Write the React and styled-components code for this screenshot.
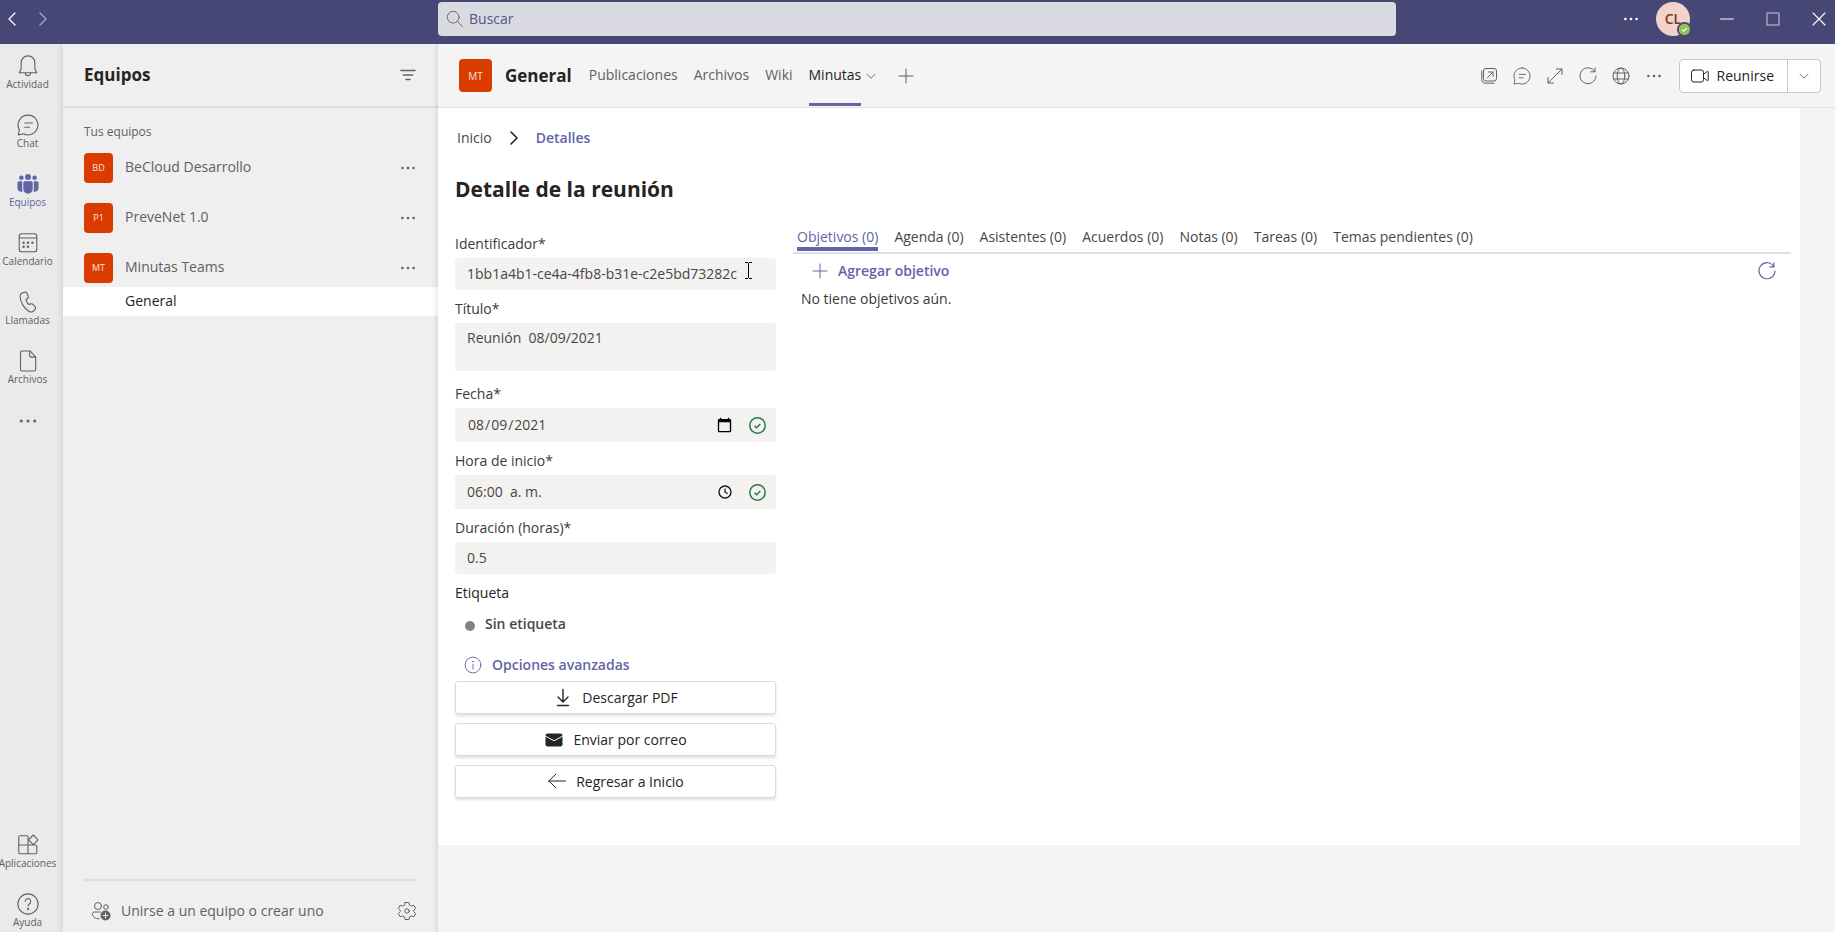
import { useState } from "react";
import styled, { createGlobalStyle } from "styled-components";

const GlobalStyle = createGlobalStyle`
  * {
    box-sizing: border-box;
  }

  body {
    margin: 0;
    background: #f4f4f4;
    color: #252423;
    font-family: "Open Sans", "Noto Sans", sans-serif;
    font-size: 14px;
    line-height: 20px;
  }

  button,
  input,
  textarea {
    font: inherit;
    color: inherit;
  }

  a {
    color: inherit;
    text-decoration: none;
  }
`;

const Shell = styled.div`
  display: flex;
  flex-direction: column;
  height: 100vh;
`;

const IconButton = styled.button`
  display: flex;
  align-items: center;
  justify-content: center;
  width: ${(props) => props.$width || 32}px;
  height: 32px;
  padding: 0;
  border: none;
  background: none;
  color: ${(props) => props.$color || "#616161"};
  cursor: pointer;
`;

/* ---------- Title bar ---------- */

const TitleBar = styled.header`
  position: relative;
  z-index: 3;
  display: grid;
  grid-template-columns: 438px 1fr 439px;
  flex-shrink: 0;
  height: 44px;
  padding-top: 2px;
  background: #464775;
`;

const HistoryNav = styled.div`
  display: flex;
  align-items: center;
  height: 34px;
`;

const SearchBox = styled.label`
  display: flex;
  align-items: center;
  gap: 5px;
  height: 34px;
  padding-left: 8px;
  border-radius: 4px;
  background: #dadae2;
  color: #616161;
`;

const SearchInput = styled.input`
  flex: 1;
  min-width: 0;
  padding: 0;
  border: none;
  outline: none;
  background: none;

  &::placeholder {
    color: #54558a;
    opacity: 1;
  }
`;

const WindowControls = styled.div`
  display: flex;
  align-items: center;
  justify-content: flex-end;
  height: 34px;
`;

const Avatar = styled.div`
  position: relative;
  display: flex;
  align-items: center;
  justify-content: center;
  width: 34px;
  height: 34px;
  margin: 0 21px 0 9px;
  border-radius: 50%;
  background: #f2d3cb;
  color: #7a3524;
  font-weight: 600;
`;

const Presence = styled.span`
  position: absolute;
  right: -2px;
  bottom: -1px;
  display: flex;
  border: 2px solid #464775;
  border-radius: 50%;
`;

/* ---------- App rail ---------- */

const Workspace = styled.div`
  display: flex;
  flex: 1;
  min-height: 0;
`;

const Rail = styled.nav`
  display: flex;
  flex-direction: column;
  justify-content: space-between;
  flex-shrink: 0;
  width: 63px;
  padding: 11px 8px 2px 0;
  background: #eaeaea;
`;

const RailGroup = styled.div`
  display: flex;
  flex-direction: column;
  gap: 22px;
`;

const RailItem = styled.button`
  display: flex;
  flex-direction: column;
  align-items: center;
  justify-content: center;
  height: ${(props) => (props.$compact ? 24 : 37)}px;
  padding: 0;
  border: none;
  background: none;
  color: ${(props) => (props.$active ? "#6264a7" : "#616161")};
  font-size: 10px;
  line-height: 15px;
  white-space: nowrap;
  cursor: pointer;
`;

/* ---------- Teams panel ---------- */

const TeamsPanel = styled.aside`
  position: relative;
  z-index: 1;
  display: flex;
  flex-direction: column;
  flex-shrink: 0;
  width: 375px;
  background: #efefef;
  box-shadow: 0 0 7px rgba(0, 0, 0, 0.16);
`;

const PanelHeader = styled.div`
  display: flex;
  align-items: center;
  justify-content: space-between;
  height: 64px;
  padding: 0 14px 0 21px;
  border-bottom: 2px solid #e0e0e0;
`;

const PanelTitle = styled.h1`
  margin: 0;
  font-size: 17px;
  font-weight: 700;
  line-height: 24px;
`;

const PanelLabel = styled.div`
  padding: 14px 21px 11px;
  color: #616161;
  font-size: 12px;
`;

const TeamList = styled.ul`
  display: flex;
  flex-direction: column;
  gap: 20px;
  margin: 0 0 4px;
  padding: 0 14px 0 21px;
  list-style: none;
`;

const TeamRow = styled.li`
  display: flex;
  align-items: center;
  gap: 12px;
  height: 30px;
  color: #616161;
`;

const TeamName = styled.a`
  flex: 1;
  padding-bottom: 3px;
`;

const TeamTile = styled.span`
  display: flex;
  align-items: center;
  justify-content: center;
  flex-shrink: 0;
  width: ${(props) => props.$size || 29}px;
  height: ${(props) => props.$size || 30}px;
  border-radius: 4px;
  background: #da3b01;
  color: #fbe3da;
  font-size: ${(props) => (props.$size ? 10 : 9)}px;
`;

const ChannelLink = styled.a`
  padding: 4px 0 5px 62px;
  background: #fff;
  color: #252423;
`;

const PanelFooter = styled.div`
  display: flex;
  align-items: center;
  justify-content: space-between;
  height: 53px;
  margin: auto 21px 0;
  padding-top: 9px;
  border-top: 2px solid #dedede;
`;

const JoinButton = styled.button`
  display: flex;
  align-items: center;
  gap: 10px;
  padding: 0 7px;
  border: none;
  background: none;
  color: #616161;
  cursor: pointer;
`;

/* ---------- Channel header ---------- */

const Main = styled.main`
  position: relative;
  z-index: 2;
  flex: 1;
  min-width: 0;
  background: #f4f4f4;
  box-shadow: 0 0 7px rgba(0, 0, 0, 0.16);
`;

const ChannelHeader = styled.div`
  display: flex;
  align-items: center;
  height: 64px;
  padding: 0 14px 0 21px;
  border-bottom: 1px solid #e1e1e1;
`;

const ChannelTitle = styled.h2`
  margin: 0 17px 0 13px;
  font-size: 17px;
  font-weight: 700;
  line-height: 24px;
`;

const ChannelTabs = styled.nav`
  display: flex;
  align-self: stretch;
  gap: 16px;
`;

const ChannelTab = styled.a`
  display: flex;
  align-items: center;
  margin-bottom: 1px;
  border-top: 3px solid transparent;
  border-bottom: 3px solid ${(props) => (props.$active ? "#6264a7" : "transparent")};
  color: ${(props) => (props.$active ? "#252423" : "#616161")};
`;

const HeaderActions = styled.div`
  display: flex;
  align-items: center;
  gap: 1px;
  margin-left: auto;
`;

const MeetGroup = styled.div`
  display: flex;
  height: 34px;
  margin-left: 8px;
  border: 1px solid #c8c8c8;
  border-radius: 4px;
  background: #fff;
`;

const MeetButton = styled.button`
  display: flex;
  align-items: center;
  gap: 7px;
  padding: 0 13px 0 10px;
  border: none;
  border-right: 1px solid #c8c8c8;
  background: none;
  cursor: pointer;
`;

/* ---------- Meeting detail ---------- */

const Page = styled.section`
  margin-right: 35px;
  padding: 20px 9px 47px 17px;
  background: #fff;
`;

const Breadcrumb = styled.nav`
  display: flex;
  align-items: center;
  gap: 12px;
  padding-left: 2px;
`;

const Crumb = styled.a`
  color: ${(props) => (props.$active ? "#6264a7" : "#484644")};
  font-weight: ${(props) => (props.$active ? 600 : 400)};
`;

const PageTitle = styled.h3`
  margin: 27px 0 30px;
  font-size: 21px;
  font-weight: 700;
  line-height: 28px;
`;

const Columns = styled.div`
  display: grid;
  grid-template-columns: 321px 1fr;
  gap: 17px;
`;

const Form = styled.form`
  display: flex;
  flex-direction: column;
  gap: 9px;
  padding-top: 1px;
`;

const Field = styled.div`
  display: flex;
  flex-direction: column;
  gap: 4px;
  margin-bottom: ${(props) => props.$space || 0}px;
`;

const FieldLabel = styled.label`
  color: #3b3a39;
`;

const InputBox = styled.div`
  position: relative;
  display: flex;
  align-items: center;
  height: ${(props) => props.$height || 32}px;
  padding: 0 10px 0 12px;
  border-radius: 3px;
  background: #f3f2f1;
  color: #484644;
`;

const TextInput = styled.input`
  flex: 1;
  min-width: 0;
  padding: 0;
  border: none;
  outline: none;
  background: none;

  &::-webkit-datetime-edit-fields-wrapper,
  &::-webkit-datetime-edit {
    padding: 0;
  }

  &::-webkit-calendar-picker-indicator {
    width: 17px;
    height: 17px;
    padding: 0;
  }
`;

const TextBox = styled.textarea`
  height: 48px;
  padding: 5px 12px;
  border: none;
  border-radius: 3px;
  outline: none;
  background: #f3f2f1;
  color: #484644;
  resize: none;
`;

const TrailingIcons = styled.span`
  display: flex;
  align-items: center;
  gap: 16px;
  margin-left: 16px;
`;

const TextPointer = styled.svg`
  position: absolute;
  top: 4px;
  right: 23px;
`;

const TagRow = styled.div`
  display: flex;
  align-items: center;
  gap: 10px;
  padding: 11px 0 15px 10px;
  color: #484644;
  font-weight: 600;
`;

const TagDot = styled.span`
  width: 10px;
  height: 10px;
  margin-top: 4px;
  border-radius: 50%;
  background: #848281;
`;

const TextButton = styled.button`
  display: flex;
  align-items: center;
  gap: ${(props) => props.$gap}px;
  height: 32px;
  padding: 0 9px;
  border: none;
  background: none;
  color: #6264a7;
  font-weight: 600;
  cursor: pointer;
`;

const ActionList = styled.div`
  display: flex;
  flex-direction: column;
  gap: 9px;
`;

const ActionButton = styled.button`
  display: flex;
  align-items: center;
  justify-content: center;
  gap: 9px;
  height: 33px;
  border: 1px solid #dcdbda;
  border-radius: 3px;
  background: #fff;
  box-shadow: 0 2px 3px rgba(0, 0, 0, 0.12);
  cursor: pointer;
`;

const DetailTabs = styled.div`
  display: flex;
  gap: 16px;
  margin-top: -6px;
  padding-left: 4px;
  border-bottom: 2px solid #e1dfdd;
`;

const DetailTab = styled.button`
  margin-bottom: 1px;
  padding: 0;
  border: none;
  border-bottom: 4px solid ${(props) => (props.$active ? "#6264a7" : "transparent")};
  background: none;
  color: ${(props) => (props.$active ? "#6264a7" : "#484644")};
  white-space: nowrap;
  cursor: pointer;
`;

const ObjectiveBar = styled.div`
  display: flex;
  align-items: center;
  justify-content: space-between;
  padding: 1px 8px;
`;

const EmptyText = styled.p`
  margin: 0;
  padding: 1px 8px;
  color: #3b3a39;
`;

/* ---------- Icons ---------- */

// eslint-disable-next-line react/prop-types
const Icon = ({ size = 20, weight = 1, children }) => (
  <svg
    width={size}
    height={size}
    viewBox="0 0 20 20"
    fill="none"
    stroke="currentColor"
    strokeWidth={weight}
    strokeLinecap="round"
    strokeLinejoin="round"
    aria-hidden="true"
  >
    {children}
  </svg>
);

const DotsIcon = (props) => (
  <Icon {...props}>
    <g fill="currentColor" stroke="none">
      <circle cx="4.4" cy="10" r="1.3" />
      <circle cx="10" cy="10" r="1.3" />
      <circle cx="15.6" cy="10" r="1.3" />
    </g>
  </Icon>
);

const BellIcon = () => (
  <Icon size={22}>
    <path d="M10 .8a6 6 0 0 0-6.2 6v5.6L2 16.2h16l-1.8-3.8V6.8a6 6 0 0 0-6.2-6ZM7.6 16.4a2.4 2.4 0 0 0 4.8 0" />
  </Icon>
);

// eslint-disable-next-line react/prop-types
const ChatIcon = ({ size = 22 }) => (
  <Icon size={size}>
    <path d="M10.2 1a9 9 0 1 1-4.3 17L1.2 19l.9-4.7A9 9 0 0 1 10.2 1ZM7 8.2h7M7 12h4.4" />
  </Icon>
);

const TeamsIcon = () => (
  <Icon size={22}>
    <g fill="currentColor" stroke="none">
      <circle cx="4" cy="4.3" r="2.1" />
      <circle cx="10" cy="3.6" r="2.7" />
      <circle cx="16" cy="4.3" r="2.1" />
      <path d="M2 7.6h2.7v7.3c0 .7.2 1.5.5 2.1-3 .5-4.8-1.2-4.8-3.6V9.2c0-.9.7-1.6 1.6-1.6Z" />
      <path d="M18 7.6h-2.7v7.3c0 .7-.2 1.5-.5 2.1 3 .5 4.8-1.2 4.8-3.6V9.2c0-.9-.7-1.6-1.6-1.6Z" />
      <path d="M7.2 7.6h5.6c.9 0 1.5.6 1.5 1.5v5.4a4.3 4.3 0 0 1-8.6 0V9.1c0-.9.6-1.5 1.5-1.5Z" />
    </g>
  </Icon>
);

const CalendarIcon = () => (
  <Icon size={22}>
    <rect x="2" y="1.6" width="16" height="16.4" rx="2.4" />
    <path d="M2 5.5h16" />
    <g fill="currentColor" stroke="none">
      <circle cx="6" cy="9.8" r="1.1" />
      <circle cx="10" cy="9.8" r="1.1" />
      <circle cx="14" cy="9.8" r="1.1" />
      <circle cx="6" cy="13.4" r="1.1" />
      <circle cx="10" cy="13.4" r="1.1" />
    </g>
  </Icon>
);

const PhoneIcon = () => (
  <Icon size={22}>
    <path d="M6.6 1.2 5 1.7C3.6 2.2 2.7 3.5 2.8 5c.3 5.400 3.700 11 8.200 13.600 1.200.7 2.800.6 3.900-.4l1.300-1.200c.8-.7.9-1.900.2-2.700l-1.700-2a2 2 0 0 0-2.100-.6l-2 .6c-1.200-1.200-2-2.600-2.400-4.200l1.500-1.500c.6-.6.7-1.400.4-2.200l-.9-2.100a2 2 0 0 0-2.600-1.100Z" />
  </Icon>
);

const FileIcon = () => (
  <Icon size={22}>
    <path d="M4.8.9h7L17 6.300v11.200c0 .9-.7 1.600-1.600 1.600H4.800c-.9 0-1.600-.7-1.600-1.600v-15c0-.9.7-1.600 1.600-1.600ZM11.500 1v4c0 .9.600 1.500 1.500 1.500h4" />
  </Icon>
);

const AppsIcon = () => (
  <Icon size={22}>
    <path d="M10 10V2.600c0-.6-.4-1-1-1H2.800c-.7 0-1.200.5-1.200 1.200v14c0 .7.500 1.200 1.200 1.200h14c.7 0 1.200-.5 1.200-1.200V11c0-.6-.4-1-1-1H1.600M10 10v8M14.800.9l3.900 3.900c.3.300.3.700 0 1l-3.900 3.900-3.900-3.900a.7.700 0 0 1 0-1Z" />
  </Icon>
);

const HelpIcon = () => (
  <Icon size={22}>
    <circle cx="10" cy="10" r="9.2" />
    <path d="M7.5 7.6a2.500 2.500 0 1 1 3.900 2.100c-.9.600-1.400 1.100-1.400 2.300" />
    <circle cx="10" cy="14.6" r=".5" fill="currentColor" />
  </Icon>
);

const FilterIcon = () => (
  <Icon weight={1.4}>
    <path d="M3 5.500h14M5.500 10h9M8 14.500h4" />
  </Icon>
);

const JoinIcon = () => (
  <Icon>
    <circle cx="7" cy="5" r="3.5" />
    <circle cx="15" cy="6" r="2.3" />
    <path d="M9.500 11H3.300c-1 0-1.800.8-1.800 1.800 0 3 2.500 5 6.500 5" />
    <circle cx="14.5" cy="14.5" r="5" fill="currentColor" stroke="none" />
    <path d="M14.500 12v5M12 14.500h5" stroke="#efefef" />
  </Icon>
);

const GearIcon = () => (
  <Icon>
    <circle cx="10" cy="10" r="2.2" />
    <path d="M8.100 1.500h3.800l.6 2.600 1.700 1 2.600-.8 1.900 3.200-2 1.900v1.200l2 1.900-1.900 3.200-2.600-.8-1.700 1-.6 2.600H8.100l-.6-2.600-1.700-1-2.600.8-1.900-3.200 2-1.900V9.400l-2-1.900 1.900-3.200 2.600.8 1.700-1Z" />
  </Icon>
);

// eslint-disable-next-line react/prop-types
const ChevronIcon = ({ direction = "down", size = 20, weight }) => {
  const shapes = {
    down: "M5.5 8l4.5 4.5L14.5 8",
    left: "M13 4l-6 6 6 6",
    right: "M7 4l6 6-6 6",
  };

  return (
    <Icon size={size} weight={weight}>
      <path d={shapes[direction]} />
    </Icon>
  );
};

const PlusIcon = () => (
  <Icon>
    <path d="M10 3v14M3 10h14" />
  </Icon>
);

const PopOutIcon = () => (
  <Icon>
    <rect x="4.5" y="2.5" width="13" height="12.5" rx="2.5" />
    <path d="M2.800 5v8.500c0 2 1.300 3.700 3.500 3.700H15M8.500 11.500l5.500-5.500M9.500 6H14v4.500" />
  </Icon>
);

const ExpandIcon = () => (
  <Icon>
    <path d="M3 17 17 3M11.500 3H17v5.500M3 11.500V17h5.500" />
  </Icon>
);

// eslint-disable-next-line react/prop-types
const RefreshIcon = ({ weight }) => (
  <Icon weight={weight}>
    <path d="M16.800 5.500A8 8 0 1 0 18 10M17 1.800v4h-4.200" />
  </Icon>
);

const GlobeIcon = () => (
  <Icon>
    <circle cx="10" cy="10" r="8" />
    <ellipse cx="10" cy="10" rx="3.8" ry="8" />
    <path d="M2.600 7h14.800M2.600 13h14.800" />
  </Icon>
);

const CameraIcon = () => (
  <Icon>
    <rect x="1.5" y="4" width="12" height="12" rx="2.3" />
    <path d="M13.500 8.300 17.300 5.400c.3-.3.900 0 .9.500v8.200c0 .5-.6.800-.9.500L13.500 11.700" />
  </Icon>
);

const SearchIcon = () => (
  <Icon size={18}>
    <circle cx="8" cy="8" r="6.5" />
    <path d="m12.800 12.800 5.200 5.400" />
  </Icon>
);

const MinimizeIcon = () => (
  <Icon size={16} weight={1.3}>
    <path d="M2 10h16" />
  </Icon>
);

const MaximizeIcon = () => (
  <Icon size={16} weight={1.3}>
    <rect x="2.5" y="2.5" width="15" height="15" />
  </Icon>
);

const CloseIcon = () => (
  <Icon size={16} weight={1.4}>
    <path d="m2.500 2.500 15 15M17.500 2.500l-15 15" />
  </Icon>
);

const PresenceIcon = () => (
  <svg width="11" height="11" viewBox="0 0 11 11" aria-hidden="true">
    <circle cx="5.5" cy="5.5" r="5.5" fill="#92c353" />
    <path d="m3.200 5.700 1.600 1.500 3-3" fill="none" stroke="#fff" strokeWidth="1.2" />
  </svg>
);

const ClockIcon = () => (
  <svg width="16" height="16" viewBox="0 0 16 16" fill="none" stroke="#1b1a19" aria-hidden="true">
    <circle cx="8" cy="8" r="6" strokeWidth="1.4" />
    <path d="M8 4.500V8l2.600 1.700" strokeWidth="1.2" />
  </svg>
);

const ValidIcon = () => (
  <svg width="17" height="17" viewBox="0 0 17 17" fill="none" stroke="#237b4b" aria-hidden="true">
    <circle cx="8.5" cy="8.5" r="7.7" strokeWidth="1.5" />
    <path d="m5.600 8.900 2 1.800 3.700-3.700" strokeWidth="1.5" />
  </svg>
);

const InfoIcon = () => (
  <Icon size={18}>
    <circle cx="10" cy="10" r="8.8" />
    <path d="M10 9v5.500" />
    <circle cx="10" cy="6.2" r=".5" fill="currentColor" />
  </Icon>
);

const DownloadIcon = () => (
  <Icon weight={1.4}>
    <path d="M10 1.500v12M5 9l5 5 5-5M4.500 17.500h11" />
  </Icon>
);

const MailIcon = () => (
  <Icon>
    <rect x="1.5" y="3.5" width="17" height="13" rx="2.2" fill="currentColor" stroke="none" />
    <path d="m1.500 6.200 8.500 4.600 8.500-4.600" stroke="#fff" />
  </Icon>
);

const BackIcon = () => (
  <Icon>
    <path d="M18.500 9H1.800M9 2 1.800 9 9 16" />
  </Icon>
);

/* ---------- Data ---------- */

const railItems = [
  { label: "Actividad", icon: <BellIcon /> },
  { label: "Chat", icon: <ChatIcon /> },
  { label: "Equipos", icon: <TeamsIcon />, active: true },
  { label: "Calendario", icon: <CalendarIcon /> },
  { label: "Llamadas", icon: <PhoneIcon /> },
  { label: "Archivos", icon: <FileIcon /> },
];

const railFooter = [
  { label: "Aplicaciones", icon: <AppsIcon /> },
  { label: "Ayuda", icon: <HelpIcon /> },
];

const teams = [
  { initials: "BD", name: "BeCloud Desarrollo" },
  { initials: "P1", name: "PreveNet 1.0" },
  { initials: "MT", name: "Minutas Teams" },
];

const channelTabs = ["Publicaciones", "Archivos", "Wiki", "Minutas"];

const headerActions = [
  { label: "Abrir en ventana", icon: <PopOutIcon /> },
  { label: "Conversación", icon: <ChatIcon size={18} /> },
  { label: "Expandir", icon: <ExpandIcon /> },
  { label: "Recargar", icon: <RefreshIcon /> },
  { label: "Ir al sitio web", icon: <GlobeIcon /> },
  { label: "Más opciones", icon: <DotsIcon /> },
];

const detailTabs = [
  "Objetivos",
  "Agenda",
  "Asistentes",
  "Acuerdos",
  "Notas",
  "Tareas",
  "Temas pendientes",
];

const MeetingForm = () => (
  <Form onSubmit={(event) => event.preventDefault()}>
    <Field>
      <FieldLabel htmlFor="identificador">Identificador*</FieldLabel>
      <InputBox>
        <TextInput
          id="identificador"
          readOnly
          value="1bb1a4b1-ce4a-4fb8-b31e-c2e5bd73282c"
        />
        <TextPointer width="9" height="17" viewBox="0 0 9 17" fill="none" stroke="#000">
          <path d="M1 .5h3M5 .5h3M4.500 1v15M1 16.500h3M5 16.500h3" />
        </TextPointer>
      </InputBox>
    </Field>

    <Field $space={4}>
      <FieldLabel htmlFor="titulo">Título*</FieldLabel>
      <TextBox id="titulo" defaultValue="Reunión  08/09/2021" />
    </Field>

    <Field>
      <FieldLabel htmlFor="fecha">Fecha*</FieldLabel>
      <InputBox $height={34}>
        <TextInput id="fecha" type="date" defaultValue="2021-08-09" />
        <TrailingIcons>
          <ValidIcon />
        </TrailingIcons>
      </InputBox>
    </Field>

    <Field>
      <FieldLabel htmlFor="hora">Hora de inicio*</FieldLabel>
      <InputBox $height={34}>
        <TextInput id="hora" defaultValue="06:00  a. m." />
        <TrailingIcons>
          <ClockIcon />
          <ValidIcon />
        </TrailingIcons>
      </InputBox>
    </Field>

    <Field>
      <FieldLabel htmlFor="duracion">Duración (horas)*</FieldLabel>
      <InputBox>
        <TextInput id="duracion" defaultValue="0.5" />
      </InputBox>
    </Field>

    <div>
      <div>Etiqueta</div>
      <TagRow>
        <TagDot />
        Sin etiqueta
      </TagRow>
      <TextButton type="button" $gap={10}>
        <InfoIcon />
        Opciones avanzadas
      </TextButton>
      <ActionList>
        <ActionButton type="button">
          <DownloadIcon />
          Descargar PDF
        </ActionButton>
        <ActionButton type="button">
          <MailIcon />
          Enviar por correo
        </ActionButton>
        <ActionButton type="button">
          <BackIcon />
          Regresar a Inicio
        </ActionButton>
      </ActionList>
    </div>
  </Form>
);

const App = () => {
  const [activeTab, setActiveTab] = useState("Objetivos");

  return (
    <Shell>
      <GlobalStyle />

      <TitleBar>
        <HistoryNav>
          <IconButton $width={24} $color="#fff" aria-label="Atrás">
            <ChevronIcon direction="left" weight={1.3} />
          </IconButton>
          <IconButton $width={37} $color="#a6a7cc" aria-label="Adelante">
            <ChevronIcon direction="right" weight={1.3} />
          </IconButton>
        </HistoryNav>
        <SearchBox>
          <SearchIcon />
          <SearchInput placeholder="Buscar" aria-label="Buscar" />
        </SearchBox>
        <WindowControls>
          <IconButton $color="#fff" aria-label="Configuración y más">
            <DotsIcon />
          </IconButton>
          <Avatar>
            CL
            <Presence>
              <PresenceIcon />
            </Presence>
          </Avatar>
          <IconButton $color="#fff" aria-label="Minimizar">
            <MinimizeIcon />
          </IconButton>
          <IconButton $width={60} $color="#c8c8dc" aria-label="Maximizar">
            <MaximizeIcon />
          </IconButton>
          <IconButton $color="#fff" aria-label="Cerrar">
            <CloseIcon />
          </IconButton>
        </WindowControls>
      </TitleBar>

      <Workspace>
        <Rail>
          <RailGroup>
            {railItems.map((item) => (
              <RailItem key={item.label} $active={item.active}>
                {item.icon}
                {item.label}
              </RailItem>
            ))}
            <RailItem $compact aria-label="Más aplicaciones">
              <DotsIcon size={24} />
            </RailItem>
          </RailGroup>
          <RailGroup>
            {railFooter.map((item) => (
              <RailItem key={item.label}>
                {item.icon}
                {item.label}
              </RailItem>
            ))}
          </RailGroup>
        </Rail>

        <TeamsPanel>
          <PanelHeader>
            <PanelTitle>Equipos</PanelTitle>
            <IconButton aria-label="Filtrar">
              <FilterIcon />
            </IconButton>
          </PanelHeader>
          <PanelLabel>Tus equipos</PanelLabel>
          <TeamList>
            {teams.map((team) => (
              <TeamRow key={team.name}>
                <TeamTile>{team.initials}</TeamTile>
                <TeamName href="#">{team.name}</TeamName>
                <IconButton aria-label={`Más opciones de ${team.name}`}>
                  <DotsIcon />
                </IconButton>
              </TeamRow>
            ))}
          </TeamList>
          <ChannelLink href="#">General</ChannelLink>
          <PanelFooter>
            <JoinButton>
              <JoinIcon />
              Unirse a un equipo o crear uno
            </JoinButton>
            <IconButton $width={20} aria-label="Administrar equipos">
              <GearIcon />
            </IconButton>
          </PanelFooter>
        </TeamsPanel>

        <Main>
          <ChannelHeader>
            <TeamTile $size={33}>MT</TeamTile>
            <ChannelTitle>General</ChannelTitle>
            <ChannelTabs>
              {channelTabs.map((tab) => (
                <ChannelTab key={tab} href="#" $active={tab === "Minutas"}>
                  {tab}
                </ChannelTab>
              ))}
            </ChannelTabs>
            <IconButton $width={20} aria-label="Opciones de pestaña">
              <ChevronIcon size={18} />
            </IconButton>
            <IconButton $width={50} aria-label="Agregar una pestaña">
              <PlusIcon />
            </IconButton>
            <HeaderActions>
              {headerActions.map((action) => (
                <IconButton key={action.label} aria-label={action.label}>
                  {action.icon}
                </IconButton>
              ))}
              <MeetGroup>
                <MeetButton>
                  <CameraIcon />
                  Reunirse
                </MeetButton>
                <IconButton aria-label="Opciones de reunión">
                  <ChevronIcon size={18} />
                </IconButton>
              </MeetGroup>
            </HeaderActions>
          </ChannelHeader>

          <Page>
            <Breadcrumb>
              <Crumb href="#">Inicio</Crumb>
              <ChevronIcon direction="right" weight={1.6} />
              <Crumb href="#" $active>
                Detalles
              </Crumb>
            </Breadcrumb>
            <PageTitle>Detalle de la reunión</PageTitle>
            <Columns>
              <MeetingForm />
              <div>
                <DetailTabs role="tablist">
                  {detailTabs.map((tab) => (
                    <DetailTab
                      key={tab}
                      role="tab"
                      aria-selected={tab === activeTab}
                      $active={tab === activeTab}
                      onClick={() => setActiveTab(tab)}
                    >
                      {tab} (0)
                    </DetailTab>
                  ))}
                </DetailTabs>
                <ObjectiveBar>
                  <TextButton type="button" $gap={8}>
                    <PlusIcon />
                    Agregar objetivo
                  </TextButton>
                  <IconButton $color="#6264a7" aria-label="Actualizar">
                    <RefreshIcon weight={1.2} />
                  </IconButton>
                </ObjectiveBar>
                <EmptyText>No tiene objetivos aún.</EmptyText>
              </div>
            </Columns>
          </Page>
        </Main>
      </Workspace>
    </Shell>
  );
};

export default App;
